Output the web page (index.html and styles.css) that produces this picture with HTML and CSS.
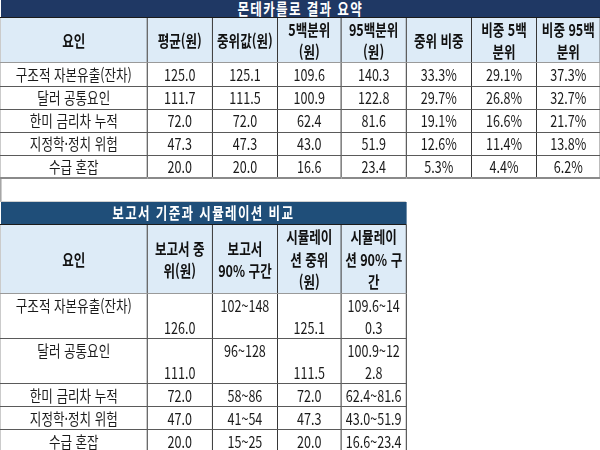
FILE: index.html
```html
<!DOCTYPE html>
<html lang="ko">
<head>
<meta charset="utf-8">
<link rel="stylesheet" href="styles.css">
</head>
<body>
<div class="sheet">
  <table class="grid grid-wide">
    <colgroup>
      <col class="c-name"><col class="c-83"><col class="c-83"><col class="c-81"><col class="c-83"><col class="c-83"><col class="c-83"><col class="c-81">
    </colgroup>
    <tr class="r-title1"><td colspan="8" class="title title-dark">몬테카를로 결과 요약</td></tr>
    <tr class="r-head2">
      <th>요인</th><th>평균(원)</th><th>중위값(원)</th><th>5백분위<br>(원)</th><th>95백분위<br>(원)</th><th>중위 비중</th><th>비중 5백<br>분위</th><th>비중 95백<br>분위</th>
    </tr>
    <tr class="r-24"><td>구조적 자본유출(잔차)</td><td>125.0</td><td>125.1</td><td>109.6</td><td>140.3</td><td>33.3%</td><td>29.1%</td><td>37.3%</td></tr>
    <tr class="r-23"><td>달러 공통요인</td><td>111.7</td><td>111.5</td><td>100.9</td><td>122.8</td><td>29.7%</td><td>26.8%</td><td>32.7%</td></tr>
    <tr class="r-23"><td>한미 금리차 누적</td><td>72.0</td><td>72.0</td><td>62.4</td><td>81.6</td><td>19.1%</td><td>16.6%</td><td>21.7%</td></tr>
    <tr class="r-23"><td>지정학·정치 위험</td><td>47.3</td><td>47.3</td><td>43.0</td><td>51.9</td><td>12.6%</td><td>11.4%</td><td>13.8%</td></tr>
    <tr class="r-22 last"><td>수급 혼잡</td><td>20.0</td><td>20.0</td><td>16.6</td><td>23.4</td><td>5.3%</td><td>4.4%</td><td>6.2%</td></tr>
  </table>

  <div class="spacer"></div>

  <table class="grid grid-narrow">
    <colgroup>
      <col class="c-name"><col class="c-83"><col class="c-83"><col class="c-81"><col class="c-83">
    </colgroup>
    <tr class="r-title2"><td colspan="5" class="title title-mid">보고서 기준과 시뮬레이션 비교</td></tr>
    <tr class="r-head3">
      <th>요인</th><th>보고서 중<br>위(원)</th><th>보고서<br>90% 구간</th><th>시뮬레이<br>션 중위<br>(원)</th><th>시뮬레이<br>션 90% 구<br>간</th>
    </tr>
    <tr class="r-45"><td class="top">구조적 자본유출(잔차)</td><td class="bottom">126.0</td><td class="top">102~148</td><td class="bottom">125.1</td><td>109.6~14<br>0.3</td></tr>
    <tr class="r-45"><td class="top">달러 공통요인</td><td class="bottom">111.0</td><td class="top">96~128</td><td class="bottom">111.5</td><td>100.9~12<br>2.8</td></tr>
    <tr class="r-23"><td>한미 금리차 누적</td><td>72.0</td><td>58~86</td><td>72.0</td><td>62.4~81.6</td></tr>
    <tr class="r-23"><td>지정학·정치 위험</td><td>47.0</td><td>41~54</td><td>47.3</td><td>43.0~51.9</td></tr>
    <tr class="r-23"><td>수급 혼잡</td><td>20.0</td><td>15~25</td><td>20.0</td><td>16.6~23.4</td></tr>
  </table>
</div>
</body>
</html>
```

FILE: styles.css
```css
html, body {
  margin: 0;
  padding: 0;
  background: #ffffff;
  overflow: hidden;
}

.sheet {
  width: 764px;
  transform: scaleX(0.785);
  transform-origin: 0 0;
  font-family: "Noto Sans CJK KR", "Noto Sans", sans-serif;
  font-size: 16px;
  color: #1a1a1a;
}

.grid {
  border-collapse: collapse;
  table-layout: fixed;
}

.grid-wide { width: 764px; }
.grid-narrow { width: 517px; }

.c-name { width: 187px; }
.c-83 { width: 83px; }
.c-81 { width: 81px; }

.grid td,
.grid th {
  padding: 0;
  text-align: center;
  vertical-align: middle;
  border-left: 1px solid #000000;
  border-right: 1px solid #000000;
  border-bottom: 1px solid #5a5a5a;
  line-height: 21px;
  white-space: nowrap;
  overflow: hidden;
}

.grid td:first-child,
.grid th:first-child { border-left: 1px solid #bdbdbd; }

.r-45 td { line-height: 22px; }

.grid th {
  background: #ddebf7;
  font-weight: 700;
  color: #111;
  line-height: 22px;
  border-bottom: 1px solid #9a9a9a;
}

.r-head3 th { line-height: 22.5px; }

.title {
  color: #ffffff;
  font-weight: 700;
  letter-spacing: 1.7px;
}

.grid td.title {
  border-left: none;
  border-right: none;
  border-bottom: 1px solid #1b1b1b;
}

.title-dark { background: #1f3864; }
.title-mid { background: #1f4e79; }

.r-title1 { height: 17px; }
.r-title1 .title { line-height: 15px; }
.r-title2 { height: 23px; }
.r-head2 { height: 45px; }
.r-head3 { height: 69px; }
.r-24 { height: 24px; }
.r-23 { height: 23px; }
.r-22 { height: 22px; }
.r-45 { height: 45px; }

.grid tr.last td { border-bottom: 2px solid #8a8a8a; }

.grid td.top { vertical-align: top; }
.grid td.bottom { vertical-align: bottom; }

.spacer {
  height: 22px;
  border-left: 2px solid #a6a6a6;
  border-bottom: 1px solid #d0d0d0;
  width: 515px;
}
```
